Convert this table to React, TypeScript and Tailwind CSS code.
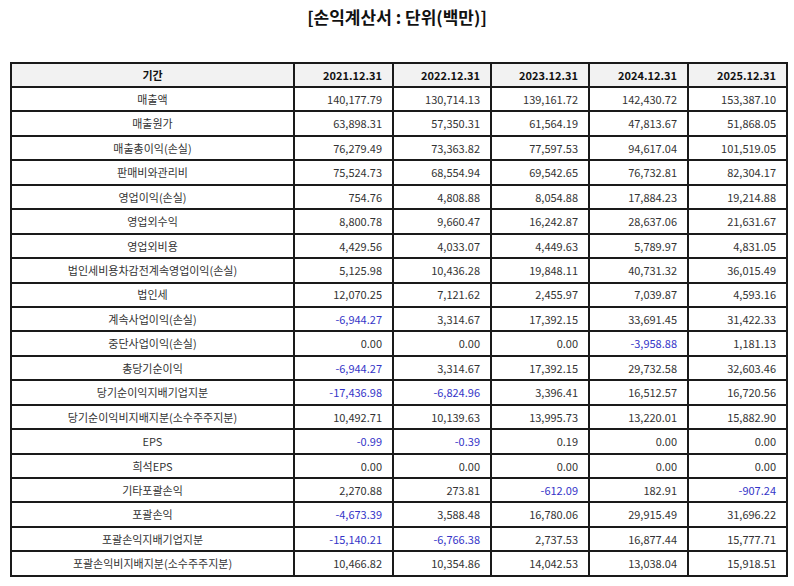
import React from "react";

const years = ["2021.12.31", "2022.12.31", "2023.12.31", "2024.12.31", "2025.12.31"];

const rows: [string, string[]][] = [
  ["매출액", ["140,177.79", "130,714.13", "139,161.72", "142,430.72", "153,387.10"]],
  ["매출원가", ["63,898.31", "57,350.31", "61,564.19", "47,813.67", "51,868.05"]],
  ["매출총이익(손실)", ["76,279.49", "73,363.82", "77,597.53", "94,617.04", "101,519.05"]],
  ["판매비와관리비", ["75,524.73", "68,554.94", "69,542.65", "76,732.81", "82,304.17"]],
  ["영업이익(손실)", ["754.76", "4,808.88", "8,054.88", "17,884.23", "19,214.88"]],
  ["영업외수익", ["8,800.78", "9,660.47", "16,242.87", "28,637.06", "21,631.67"]],
  ["영업외비용", ["4,429.56", "4,033.07", "4,449.63", "5,789.97", "4,831.05"]],
  ["법인세비용차감전계속영업이익(손실)", ["5,125.98", "10,436.28", "19,848.11", "40,731.32", "36,015.49"]],
  ["법인세", ["12,070.25", "7,121.62", "2,455.97", "7,039.87", "4,593.16"]],
  ["계속사업이익(손실)", ["-6,944.27", "3,314.67", "17,392.15", "33,691.45", "31,422.33"]],
  ["중단사업이익(손실)", ["0.00", "0.00", "0.00", "-3,958.88", "1,181.13"]],
  ["총당기순이익", ["-6,944.27", "3,314.67", "17,392.15", "29,732.58", "32,603.46"]],
  ["당기순이익지배기업지분", ["-17,436.98", "-6,824.96", "3,396.41", "16,512.57", "16,720.56"]],
  ["당기순이익비지배지분(소수주주지분)", ["10,492.71", "10,139.63", "13,995.73", "13,220.01", "15,882.90"]],
  ["EPS", ["-0.99", "-0.39", "0.19", "0.00", "0.00"]],
  ["희석EPS", ["0.00", "0.00", "0.00", "0.00", "0.00"]],
  ["기타포괄손익", ["2,270.88", "273.81", "-612.09", "182.91", "-907.24"]],
  ["포괄손익", ["-4,673.39", "3,588.48", "16,780.06", "29,915.49", "31,696.22"]],
  ["포괄손익지배기업지분", ["-15,140.21", "-6,766.38", "2,737.53", "16,877.44", "15,777.71"]],
  ["포괄손익비지배지분(소수주주지분)", ["10,466.82", "10,354.86", "14,042.53", "13,038.04", "15,918.51"]],
];

export default function App() {
  return (
    <div className="h-[586px] w-[794px] bg-white pt-[6px] font-['Noto_Sans_CJK_KR',sans-serif] text-[#333]">
      <h1 className="text-center text-[17px] font-bold leading-[22px] text-[#111]">[손익계산서 : 단위(백만)]</h1>

      <table className="mx-[10px] mt-[34px] w-[776px] table-fixed border-collapse text-[11px]">
        <colgroup>
          <col className="w-[283px]" />
          <col className="w-[99px]" />
          <col className="w-[98px]" />
          <col className="w-[98px]" />
          <col className="w-[99px]" />
          <col className="w-[99px]" />
        </colgroup>
        <thead>
          <tr className="h-[24px] bg-[#f2f2f2]">
            <th className="border-2 border-[#1a1a1a] font-bold text-[#111]">기간</th>
            {years.map((y) => (
              <th key={y} className="border-2 border-[#1a1a1a] pr-[10px] text-right font-bold text-[#111]">
                {y}
              </th>
            ))}
          </tr>
        </thead>
        <tbody>
          {rows.map(([label, vals]) => (
            <tr key={label} className="h-[24.45px]">
              <td className="border-2 border-[#1a1a1a] text-center">{label}</td>
              {vals.map((v, i) => (
                <td
                  key={i}
                  className={
                    "border-2 border-[#1a1a1a] pr-[10px] text-right " + (v.startsWith("-") ? "text-[#3535c8]" : "")
                  }
                >
                  {v}
                </td>
              ))}
            </tr>
          ))}
        </tbody>
      </table>
    </div>
  );
}
